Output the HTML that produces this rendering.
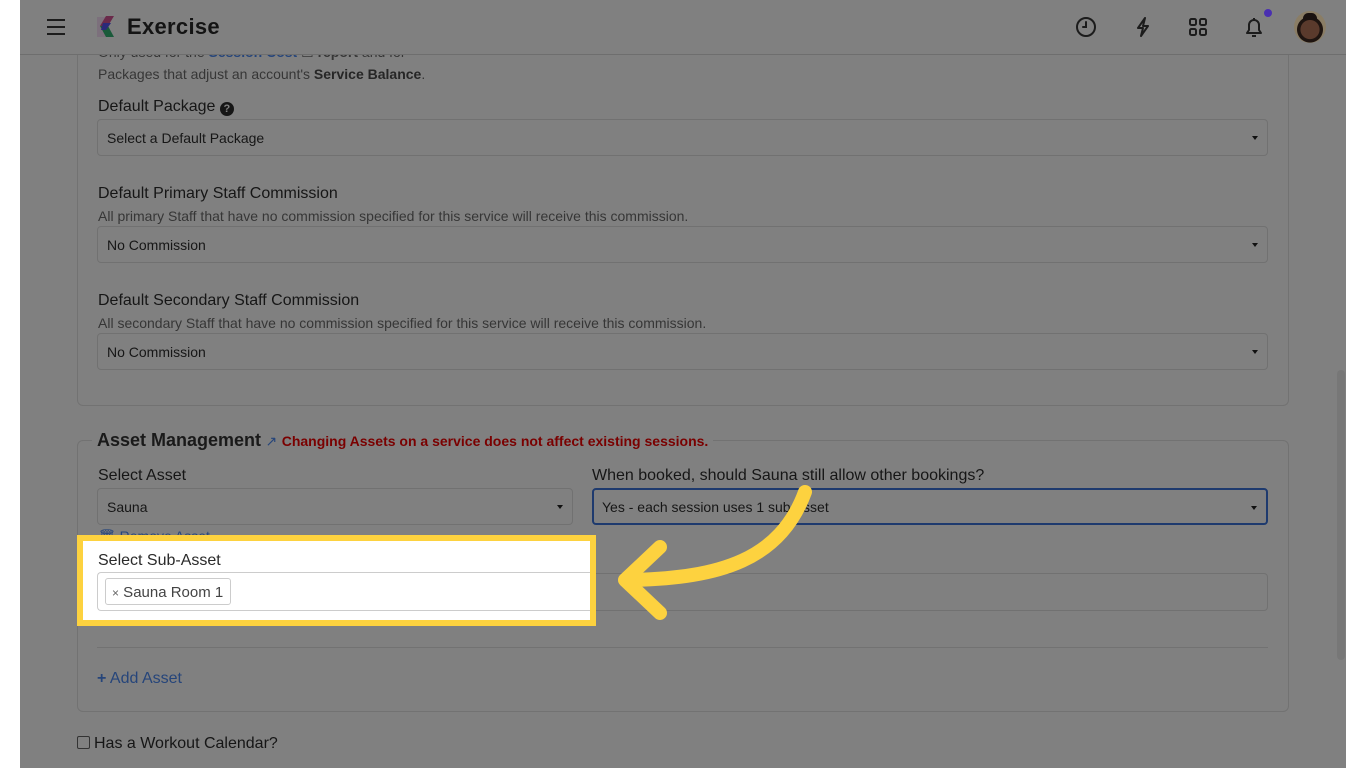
<!DOCTYPE html>
<html><head><meta charset="utf-8"><style>
*{box-sizing:border-box;margin:0;padding:0}
body{width:1366px;height:768px;overflow:hidden;background:#fff;font-family:"Liberation Sans",Arial,sans-serif;position:relative}
.page{position:absolute;left:20px;top:0;width:1326px;height:768px;background:#808080;overflow:hidden}
.a{position:absolute}
.lbl{font-size:16px;color:#161616}
.help{font-size:14px;color:#363636}
.sel{position:absolute;border:1px solid #717171;border-radius:4px;height:37px;font-size:14px;color:#161616;padding:10px 9px}
.sel:after{content:"";position:absolute;right:9px;top:16px;border-left:3.5px solid transparent;border-right:3.5px solid transparent;border-top:4px solid #111}
.sel.na:after{display:none}
.card{position:absolute;border:1px solid #727272;border-radius:6px}
</style></head><body>
<div class="page">
 <div class="card" style="left:57px;top:20px;width:1212px;height:386px;border-top:none;border-radius:0 0 6px 6px"></div>
 <div class="a help" style="left:78px;top:44px;color:#363636">Only used for the <b style="color:#26457a">Session Cost</b> ☐ <b>report</b> and for</div>
 <div class="a help" style="left:78px;top:66px">Packages that adjust an account's <b style="color:#262626">Service Balance</b>.</div>
 <div class="a lbl" style="left:78px;top:98px">Default Package <span style="display:inline-block;width:14px;height:14px;border-radius:50%;background:#161616;color:#808080;font-size:11px;font-weight:bold;text-align:center;line-height:14px;vertical-align:-1px">?</span></div>
 <div class="sel" style="left:77px;top:119px;width:1171px">Select a Default Package</div>
 <div class="a lbl" style="left:78px;top:185px">Default Primary Staff Commission</div>
 <div class="a help" style="left:78px;top:208px">All primary Staff that have no commission specified for this service will receive this commission.</div>
 <div class="sel" style="left:77px;top:226px;width:1171px">No Commission</div>
 <div class="a lbl" style="left:78px;top:292px">Default Secondary Staff Commission</div>
 <div class="a help" style="left:78px;top:315px">All secondary Staff that have no commission specified for this service will receive this commission.</div>
 <div class="sel" style="left:77px;top:333px;width:1171px">No Commission</div>

 <div class="card" style="left:57px;top:440px;width:1212px;height:272px"></div>
 <div class="a" style="left:72px;top:430px;background:#808080;padding:0 5px;white-space:nowrap">
  <span style="font-size:18px;font-weight:bold;color:#1a1a1a">Asset Management</span>
  <span style="color:#26457a;font-size:14px">&#x2197;&#xFE0E;</span>
  <span style="font-size:14px;font-weight:bold;color:#7a0000">Changing Assets on a service does not affect existing sessions.</span>
 </div>
 <div class="a lbl" style="left:78px;top:467px">Select Asset</div>
 <div class="sel" style="left:77px;top:488px;width:476px">Sauna</div>
 <div class="a lbl" style="left:572px;top:467px">When booked, should Sauna still allow other bookings?</div>
 <div class="sel" style="left:572px;top:488px;width:676px;border:2px solid #1e3a6e;padding:9px 8px">Yes - each session uses 1 sub-asset</div>
 <div class="a help" style="left:78px;top:528px;color:#26457a">🗑 Remove Asset</div>
 <div class="sel na" style="left:560px;top:573px;width:688px;height:38px"></div>
 <div class="a" style="left:77px;top:647px;width:1171px;height:1px;background:#727272"></div>
 <div class="a" style="left:77px;top:670px;font-size:16px;color:#26457a"><b>+</b> Add Asset</div>
 <div class="a" style="left:57px;top:736px;width:13px;height:13px;border:1px solid #333;border-radius:2px"></div>
 <div class="a lbl" style="left:74px;top:735px">Has a Workout Calendar?</div>
 <div class="a" style="left:1317px;top:370px;width:8px;height:290px;background:#777;border-radius:4px"></div>

 <div class="a" style="left:57px;top:535px;width:519px;height:91px;border:6px solid #fdd23f;background:#fff"></div>
 <div class="a lbl" style="left:78px;top:552px;color:#2a2a2a">Select Sub-Asset</div>
 <div class="a" style="left:77px;top:572px;width:493px;height:39px;border:1px solid #ccc;border-right:none;border-radius:4px 0 0 4px"></div>
 <div class="a" style="left:85px;top:578px;height:27px;border:1px solid #ccc;border-radius:3px;padding:5px 7px 0 6px;font-size:15px;color:#444"><span style="font-size:12px;color:#666">×</span> Sauna Room 1</div>

 <svg class="a" style="left:0;top:0" width="1326" height="768"><g fill="none" stroke="#fdd23f" stroke-width="14" stroke-linecap="round" stroke-linejoin="round">
  <path d="M785,492 C760,560 700,578 612,580"/>
  <path d="M640,547 L605,580 L640,613"/></g></svg>

 <div class="a" style="left:0;top:0;width:1326px;height:55px;background:#808080;border-bottom:1px solid #6e6e6e"></div>
 <div class="a" style="left:27px;top:19px;width:18px;height:2px;background:#1c1c1c;box-shadow:0 7px 0 #1c1c1c,0 14px 0 #1c1c1c"></div>
 <svg class="a" style="left:74px;top:14px" width="26" height="26"><path d="M3,3 L12,3 L9,13 L12,23 L3,23 Z" fill="#7a6a7a" opacity=".7"/><path d="M12,2 L20,2 L14,12 L6,12 Z" fill="#6a2a4a"/><path d="M6,12 L14,12 L20,23 L12,23 Z" fill="#1a5a3a"/><path d="M9,9 L17,9 L12,16 L7,16Z" fill="#2a2a7a"/></svg>
 <div class="a" style="left:107px;top:14px;font-size:22px;font-weight:bold;color:#141414;letter-spacing:.3px">Exercise</div>
 <svg class="a" style="left:1054px;top:15px" width="24" height="24" fill="none" stroke="#1c1c1c" stroke-width="2" stroke-linecap="round"><circle cx="12" cy="12" r="9"/><path d="M12,7 V12 H9"/></svg>
 <svg class="a" style="left:1111px;top:15px" width="24" height="24" fill="none" stroke="#1c1c1c" stroke-width="2" stroke-linejoin="round"><path d="M14,3 L7,13 H12 L10,21 L17,11 H12 Z"/></svg>
 <svg class="a" style="left:1166px;top:15px" width="24" height="24" fill="none" stroke="#1c1c1c" stroke-width="2"><rect x="4" y="4" width="6" height="6" rx="1.5"/><rect x="14" y="4" width="6" height="6" rx="1.5"/><rect x="4" y="14" width="6" height="6" rx="1.5"/><rect x="14" y="14" width="6" height="6" rx="1.5"/></svg>
 <svg class="a" style="left:1222px;top:14px" width="24" height="26" fill="none" stroke="#1c1c1c" stroke-width="2" stroke-linejoin="round"><path d="M5,19 H19 L17,16 V11 A5,5 0 0 0 7,11 V16 Z"/><path d="M10,22 H14"/><path d="M12,4 V6"/></svg>
 <div class="a" style="left:1244px;top:9px;width:8px;height:8px;border-radius:50%;background:#4a2fb0"></div>
 <div class="a" style="left:1274px;top:11px;width:32px;height:32px;border-radius:50%;background:radial-gradient(circle at 50% 58%,#5a3a2c 0 38%,#1e1410 40% 52%,#8a7d65 54%)"></div>
 <div class="a" style="left:1283px;top:13px;width:14px;height:7px;border-radius:7px 7px 2px 2px;background:#1a1210"></div>
</div>
</body></html>
